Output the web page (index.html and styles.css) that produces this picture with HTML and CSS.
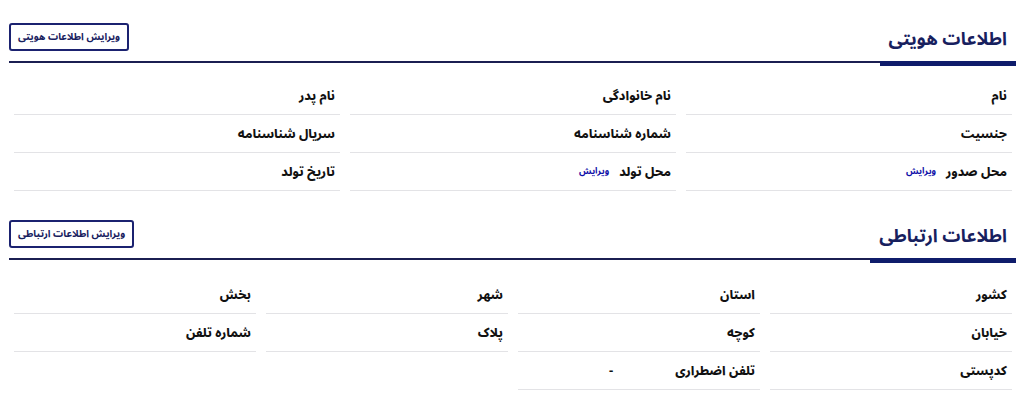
FILE: index.html
```html
<!DOCTYPE html>
<html lang="fa" dir="rtl">
<head>
<meta charset="utf-8">
<title>اطلاعات کاربر</title>
<link rel="stylesheet" href="styles.css">
</head>
<body>
<main class="page">
  <section class="section section-identity">
    <header class="section-head">
      <h2 class="section-title">اطلاعات هویتی</h2>
      <button class="edit-btn" type="button">ویرایش اطلاعات هویتی</button>
    </header>
    <div class="info-grid cols-3">
      <div class="info-item"><span class="label">نام</span></div>
      <div class="info-item"><span class="label">نام خانوادگی</span></div>
      <div class="info-item"><span class="label">نام پدر</span></div>
      <div class="info-item"><span class="label">جنسیت</span></div>
      <div class="info-item"><span class="label">شماره شناسنامه</span></div>
      <div class="info-item"><span class="label">سریال شناسنامه</span></div>
      <div class="info-item"><span class="label">محل صدور</span><a class="edit-link" href="#">ویرایش</a></div>
      <div class="info-item"><span class="label">محل تولد</span><a class="edit-link" href="#">ویرایش</a></div>
      <div class="info-item"><span class="label">تاریخ تولد</span></div>
    </div>
  </section>

  <section class="section section-contact">
    <header class="section-head">
      <h2 class="section-title">اطلاعات ارتباطی</h2>
      <button class="edit-btn" type="button">ویرایش اطلاعات ارتباطی</button>
    </header>
    <div class="info-grid cols-4">
      <div class="info-item"><span class="label">کشور</span></div>
      <div class="info-item"><span class="label">استان</span></div>
      <div class="info-item"><span class="label">شهر</span></div>
      <div class="info-item"><span class="label">بخش</span></div>
      <div class="info-item"><span class="label">خیابان</span></div>
      <div class="info-item"><span class="label">کوچه</span></div>
      <div class="info-item"><span class="label">پلاک</span></div>
      <div class="info-item"><span class="label">شماره تلفن</span></div>
      <div class="info-item"><span class="label">کدپستی</span></div>
      <div class="info-item"><span class="label">تلفن اضطراری</span><span class="value">-</span></div>
    </div>
  </section>
</main>
</body>
</html>
```

FILE: styles.css
```css
* { box-sizing: border-box; }

html, body {
  margin: 0;
  padding: 0;
  background: #ffffff;
}

body {
  font-family: "Noto Sans Arabic", "DejaVu Sans", sans-serif;
  color: #111111;
}

.page {
  padding: 23px 8px 0 9px;
}

.section-contact {
  margin-top: 29px;
}

.section-head {
  display: flex;
  justify-content: space-between;
  align-items: center;
  border-bottom: 2px solid #1b1f52;
  padding-bottom: 10px;
}

.section-title {
  margin: 0 0 -15px 0;
  padding: 2px 9px 8px;
  font-size: 18px;
  font-weight: 700;
  line-height: 28px;
  color: #17205e;
  border-bottom: 5px solid #0f1c6b;
}

.edit-btn {
  height: 28px;
  padding: 0 7px;
  border: 2px solid #1b2270;
  border-radius: 3px;
  background: #ffffff;
  color: #17205e;
  font-family: inherit;
  font-size: 10px;
  font-weight: 700;
  line-height: 24px;
}

.info-grid {
  display: grid;
  column-gap: 10px;
  margin-top: 14px;
  padding: 0 4px 0 5px;
}

.section-contact .info-grid {
  margin-top: 16px;
}

.cols-3 { grid-template-columns: repeat(3, 1fr); }
.cols-4 { grid-template-columns: repeat(4, 1fr); }

.info-item {
  display: flex;
  align-items: center;
  height: 38px;
  padding: 0 5px;
  border-bottom: 1px solid #e3e3e6;
}

.label {
  font-size: 12.5px;
  font-weight: 800;
  color: #111111;
}

.edit-link {
  margin-right: 10px;
  font-size: 9px;
  font-weight: 700;
  color: #1010a8;
  text-decoration: none;
}

.value {
  margin-right: 62px;
  font-size: 13px;
  font-weight: 700;
}
```
